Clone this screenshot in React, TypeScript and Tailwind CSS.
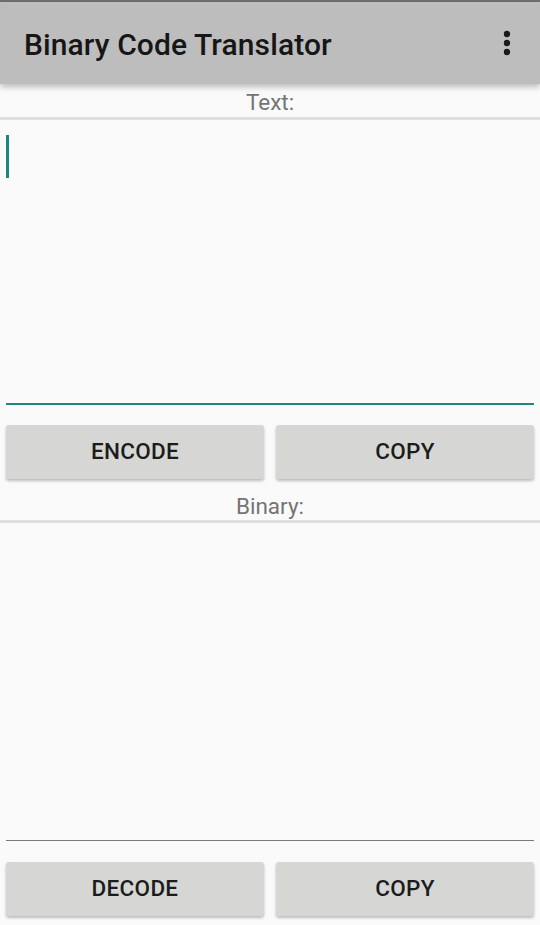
const ActionButton = ({ label }: { label: string }) => (
  <button className="flex-1 h-[54px] rounded-[3px] bg-[#d6d7d5] shadow-[0_2px_3px_rgba(0,0,0,0.25)] text-[22.5px] font-medium text-[#1c1c1c] tracking-[0.3px]">
    {label}
  </button>
);

const OverflowIcon = () => (
  <svg width="12" height="30" viewBox="0 0 12 30" className="text-[#1a1a1a]">
    <circle cx="6" cy="6" r="3.2" fill="currentColor" />
    <circle cx="6" cy="15" r="3.2" fill="currentColor" />
    <circle cx="6" cy="24" r="3.2" fill="currentColor" />
  </svg>
);

export default function App() {
  return (
    <div className="w-full h-[925px] bg-[#fafafa] flex flex-col font-['Roboto',sans-serif] overflow-hidden">
      <div className="h-[2px] bg-[#6f6f6f]" />
      <header className="relative z-10 h-[82px] bg-[#bdbdbd] shadow-[0_3px_6px_rgba(0,0,0,0.25)] flex items-center justify-between pl-6 pr-[27px]">
        <h1 className="text-[30px] font-medium text-[#161616] tracking-[0.1px] pt-[2px]">Binary Code Translator</h1>
        <OverflowIcon />
      </header>

      <div className="h-[33px] flex items-end justify-center pb-[2px]">
        <span className="text-[22.5px] leading-[26px] text-[#747474]">Text:</span>
      </div>
      <div className="h-[3px] bg-[#dedede]" />
      <div className="h-[283px] pt-[15px] pl-[6px]">
        <div className="w-[3px] h-[43px] bg-[#1e877b]" />
      </div>
      <div className="mx-[6px] h-[2px] bg-[#1e877b]" />
      <div className="flex gap-3 px-[6px] pt-5">
        <ActionButton label="ENCODE" />
        <ActionButton label="COPY" />
      </div>

      <div className="h-[41px] flex items-end justify-center pb-[1px]">
        <span className="text-[22.5px] leading-[26px] text-[#747474]">Binary:</span>
      </div>
      <div className="h-[3px] bg-[#dedede]" />
      <div className="h-[317px]" />
      <div className="mx-[6px] h-px bg-[#7a7a7a]" />
      <div className="flex gap-3 px-[6px] pt-[21px]">
        <ActionButton label="DECODE" />
        <ActionButton label="COPY" />
      </div>
    </div>
  );
}
